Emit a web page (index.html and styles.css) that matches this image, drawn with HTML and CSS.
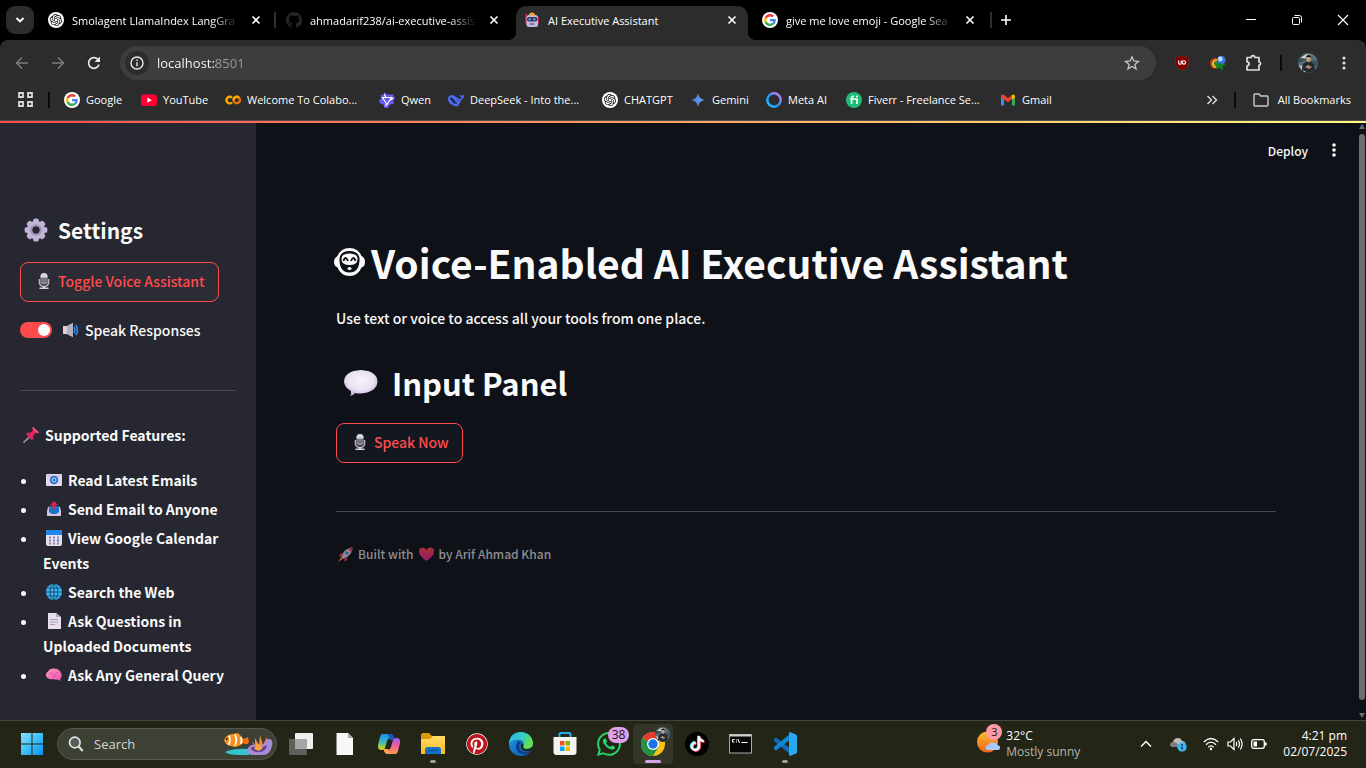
FILE: index.html
```html
<!DOCTYPE html>
<html lang="en">
<head>
<meta charset="utf-8">
<meta name="viewport" content="width=device-width, initial-scale=1">
<title>AI Executive Assistant</title>
<link rel="stylesheet" href="styles.css">
</head>
<body>
<svg class="defs" aria-hidden="true">
  <defs>
    <linearGradient id="win" x1="0" y1="0" x2="1" y2="1"><stop offset="0" stop-color="#8be0fb"/><stop offset=".5" stop-color="#3fc0fa"/><stop offset="1" stop-color="#0a90f5"/></linearGradient>
    <linearGradient id="gem" x1="0" y1="0" x2="1" y2="0"><stop offset="0" stop-color="#3f80f0"/><stop offset="1" stop-color="#6fa3e0"/></linearGradient>
    <linearGradient id="meta" x1="0" y1="1" x2="1" y2="0"><stop offset="0" stop-color="#1cc6ff"/><stop offset=".5" stop-color="#2a8cf5"/><stop offset="1" stop-color="#e77bf5"/></linearGradient>
    <linearGradient id="edgeTop" x1="0" y1="0" x2="1" y2=".4"><stop offset="0" stop-color="#2bb6ee"/><stop offset=".6" stop-color="#35cfc0"/><stop offset="1" stop-color="#68e04c"/></linearGradient>
    <linearGradient id="edgeLow" x1="0" y1="0" x2="1" y2="1"><stop offset="0" stop-color="#1f9de8"/><stop offset="1" stop-color="#0c4ea5"/></linearGradient>
    <linearGradient id="folder" x1="0" y1="0" x2="0" y2="1"><stop offset="0" stop-color="#ffdc68"/><stop offset="1" stop-color="#fcbb1c"/></linearGradient>
    <linearGradient id="sun" x1="0" y1="0" x2="0" y2="1"><stop offset="0" stop-color="#fbc02d"/><stop offset="1" stop-color="#f0601c"/></linearGradient>
    <linearGradient id="cop1" x1="0" y1="0" x2="0" y2="1"><stop offset="0" stop-color="#1c8df0"/><stop offset=".5" stop-color="#3bb6c0"/><stop offset=".8" stop-color="#9ad13a"/><stop offset="1" stop-color="#f3cf2c"/></linearGradient>
    <linearGradient id="cop2" x1="0" y1="0" x2="0" y2="1"><stop offset="0" stop-color="#a45cf0"/><stop offset=".5" stop-color="#f0609a"/><stop offset="1" stop-color="#fb9a4c"/></linearGradient>
    <radialGradient id="bubble" cx=".5" cy=".4" r=".6"><stop offset="0" stop-color="#f7f3fa"/><stop offset=".65" stop-color="#e9e1f0"/><stop offset="1" stop-color="#bfaed6"/></radialGradient>
    <linearGradient id="heart" x1="0" y1="0" x2="0" y2="1"><stop offset="0" stop-color="#a83236"/><stop offset="1" stop-color="#931b6e"/></linearGradient>
    <linearGradient id="brain" x1="0" y1="0" x2="1" y2="1"><stop offset="0" stop-color="#ff9bc0"/><stop offset="1" stop-color="#f04fae"/></linearGradient>

    <symbol id="close" viewBox="0 0 10 10"><path d="M1.500 1.500l7 7M8.500 1.500l-7 7" stroke="currentColor" stroke-width="1.600" fill="none"/></symbol>
    <symbol id="gpt" viewBox="0 0 32 32"><circle cx="16" cy="16" r="16" fill="#fff"/><path transform="translate(4 4)" fill="#111" d="M22.2819 9.8211a5.9847 5.9847 0 0 0-.5157-4.9108 6.0462 6.0462 0 0 0-6.5098-2.9A6.0651 6.0651 0 0 0 4.9807 4.1818a5.9847 5.9847 0 0 0-3.9977 2.9 6.0462 6.0462 0 0 0 .7427 7.0966 5.98 5.98 0 0 0 .511 4.9107 6.051 6.051 0 0 0 6.5146 2.9001A5.9847 5.9847 0 0 0 13.2599 24a6.0557 6.0557 0 0 0 5.7718-4.2058 5.9894 5.9894 0 0 0 3.9977-2.9001 6.0557 6.0557 0 0 0-.7475-7.0729zm-9.022 12.6081a4.4755 4.4755 0 0 1-2.8764-1.0408l.1419-.0804 4.7783-2.7582a.7948.7948 0 0 0 .3927-.6813v-6.7369l2.02 1.1686a.071.071 0 0 1 .038.052v5.5826a4.504 4.504 0 0 1-4.4945 4.4944zm-9.6607-4.1254a4.4708 4.4708 0 0 1-.5346-3.0137l.142.0852 4.783 2.7582a.7712.7712 0 0 0 .7806 0l5.8428-3.3685v2.3324a.0804.0804 0 0 1-.0332.0615L9.74 19.9502a4.4992 4.4992 0 0 1-6.1408-1.6464zM2.3408 7.8956a4.485 4.485 0 0 1 2.3655-1.9728V11.6a.7664.7664 0 0 0 .3879.6765l5.8144 3.3543-2.0201 1.1685a.0757.0757 0 0 1-.071 0l-4.8303-2.7865A4.504 4.504 0 0 1 2.3408 7.872zm16.5963 3.8558L13.1038 8.364 15.1192 7.2a.0757.0757 0 0 1 .071 0l4.8303 2.7913a4.4944 4.4944 0 0 1-.6765 8.1042v-5.6772a.79.79 0 0 0-.407-.667zm2.0107-3.0231l-.142-.0852-4.7735-2.7818a.7759.7759 0 0 0-.7854 0L9.409 9.2297V6.8974a.0662.0662 0 0 1 .0284-.0615l4.8303-2.7866a4.4992 4.4992 0 0 1 6.6802 4.66zM8.3065 12.863l-2.02-1.1638a.0804.0804 0 0 1-.038-.0567V6.0742a4.4992 4.4992 0 0 1 7.3757-3.4537l-.142.0805L8.704 5.459a.7948.7948 0 0 0-.3927.6813zm1.0976-2.3654l2.602-1.4998 2.6069 1.4998v2.9994l-2.5974 1.4997-2.6067-1.4997Z"/></symbol>
    <symbol id="google" viewBox="-8 -8 64 64"><circle cx="24" cy="24" r="32" fill="#fff"/><path fill="#EA4335" d="M24 9.500c3.540 0 6.710 1.220 9.210 3.600l6.850-6.850C35.900 2.380 30.470 0 24 0 14.620 0 6.510 5.380 2.560 13.220l7.980 6.190C12.430 13.720 17.740 9.500 24 9.500z"/><path fill="#4285F4" d="M46.980 24.550c0-1.570-.15-3.090-.38-4.550H24v9.020h12.940c-.58 2.960-2.260 5.480-4.780 7.180l7.730 6c4.510-4.180 7.090-10.360 7.090-17.650z"/><path fill="#FBBC05" d="M10.530 28.590c-.48-1.450-.76-2.990-.76-4.590s.27-3.140.76-4.590l-7.980-6.190C.92 16.460 0 20.120 0 24c0 3.880.92 7.540 2.560 10.780l7.970-6.190z"/><path fill="#34A853" d="M24 48c6.480 0 11.930-2.130 15.890-5.810l-7.730-6c-2.150 1.450-4.920 2.300-8.160 2.300-6.260 0-11.570-4.220-13.470-9.910l-7.980 6.190C6.510 42.620 14.620 48 24 48z"/></symbol>
    <symbol id="mic" viewBox="0 0 12 16"><path d="M1.500 6v3.500a4.500 4 0 0 0 9 0V6" stroke="#b5b0bb" stroke-width="1.700" fill="none"/><rect x="2.500" y="0" width="7" height="11.500" rx="3.500" fill="#8d8894"/><path d="M2.500 3.500a3.500 3.500 0 0 1 7 0v1h-7z" fill="#d9d5de"/><path d="M3 6h6M3 8h6" stroke="#5b5762" stroke-width=".8"/><path d="M5 13h2v1.500h3.500V16h-9v-1.500H5z" fill="#d8d4dc"/></symbol>
    <symbol id="me" viewBox="0 0 20 20"><circle cx="10" cy="10" r="10" fill="#5a7078"/><path d="M0 10A10 10 0 0 1 8 .2L9 7z" fill="#344d52"/><path d="M2 5l6-4 5 1-2 4z" fill="#bfcdd1"/><path d="M13 8l6-1 1 4-4 4z" fill="#365567"/><path d="M4 18l1-7 4-3h3l4 3 1 6q-6 5-13 1z" fill="#272a2b"/><ellipse cx="10.500" cy="6" rx="2.300" ry="3" fill="#c69d83"/><path d="M8 5q0-3 3-3 2 0 2 3l-1-1H9z" fill="#111"/><path d="M7 14l3-2 4 2-3 2z" fill="#b08b74"/><path d="M1 12l3 1v4zM5 17l3 2H6z" fill="#c8cccb"/></symbol>
  </defs>
</svg>

<header class="browser">
  <div class="tabstrip">
    <button class="tab-search" aria-label="Search tabs"><svg width="10" height="10" viewBox="0 0 10 10"><path d="M1.500 3L5 6.500 8.500 3" stroke="#fff" stroke-width="1.800" fill="none"/></svg></button>
    <div class="tab">
      <svg class="fav"><use href="#gpt"/></svg><span class="tab-title faded">Smolagent LlamaIndex LangGra</span>
      <button class="tab-close" aria-label="Close tab"><svg width="10" height="10"><use href="#close"/></svg></button>
    </div>
    <div class="tab ruled">
      <svg class="fav" viewBox="0 0 16 16"><path fill="#22262b" d="M8 0C3.580 0 0 3.580 0 8c0 3.540 2.290 6.530 5.470 7.590.4.070.55-.17.55-.38 0-.19-.01-.82-.01-1.490-2.010.370-2.530-.49-2.690-.94-.09-.23-.48-.94-.82-1.130-.28-.15-.68-.52-.01-.53.630-.01 1.080.580 1.230.820.720 1.210 1.870.870 2.330.660.070-.52.280-.87.510-1.070-1.780-.2-3.640-.89-3.640-3.950 0-.87.310-1.590.820-2.150-.08-.2-.36-1.020.080-2.120 0 0 .67-.21 2.200.820.640-.18 1.320-.27 2-.27s1.360.090 2 .27c1.530-1.040 2.200-.82 2.200-.82.440 1.100.160 1.920.080 2.120.510.560.820 1.270.820 2.150 0 3.070-1.870 3.750-3.650 3.950.290.250.540.730.540 1.480 0 1.070-.01 1.930-.01 2.200 0 .21.150.460.550.380A8.010 8.010 0 0 0 16 8c0-4.420-3.580-8-8-8z"/></svg><span class="tab-title faded">ahmadarif238/ai-executive-assis</span>
      <button class="tab-close" aria-label="Close tab"><svg width="10" height="10"><use href="#close"/></svg></button>
    </div>
    <div class="tab active">
      <svg class="fav" viewBox="0 0 16 16"><path d="M2 1.500v10.500M14 5v7" stroke="#e21c5c" stroke-width="1.500"/><rect x="2.500" y="3" width="11.500" height="12" rx="2.500" fill="#c9b9e0"/><path d="M5 3.500Q5 .5 8 .5t3 3z" fill="#f5a623"/><rect x="3" y="5" width="10.500" height="4.500" rx="2" fill="#3a3550"/><circle cx="5.700" cy="7.200" r="1.200" fill="#3fa0ff"/><circle cx="10.300" cy="7.200" r="1.200" fill="#3fa0ff"/><rect x="5.500" y="11.200" width="5" height="1.500" rx=".7" fill="#6f6384"/></svg><span class="tab-title">AI Executive Assistant</span>
      <button class="tab-close" aria-label="Close tab"><svg width="10" height="10"><use href="#close"/></svg></button>
    </div>
    <div class="tab">
      <svg class="fav"><use href="#google"/></svg><span class="tab-title faded">give me love emoji - Google Sea</span>
      <button class="tab-close" aria-label="Close tab"><svg width="10" height="10"><use href="#close"/></svg></button>
    </div>
    <button class="new-tab ruled" aria-label="New tab"><svg width="12" height="12" viewBox="0 0 12 12"><path d="M6 1v10M1 6h10" stroke="#fff" stroke-width="1.600"/></svg></button>
    <div class="win-controls">
      <button aria-label="Minimise"><svg width="12" height="12" viewBox="0 0 12 12"><path d="M1 5.500h10" stroke="#fff"/></svg></button>
      <button aria-label="Restore"><svg width="12" height="12" viewBox="0 0 12 12"><rect x="1.500" y="3.500" width="7" height="7" rx="1" stroke="#fff" fill="none"/><path d="M3.500 1.500h5a2 2 0 0 1 2 2v5" stroke="#fff" fill="none"/></svg></button>
      <button aria-label="Close"><svg width="12" height="12" viewBox="0 0 12 12"><path d="M1 1l10 10M11 1L1 11" stroke="#fff" stroke-width="1.200"/></svg></button>
    </div>
  </div>

  <div class="toolbar">
    <nav class="nav-buttons">
      <button aria-label="Back"><svg width="16" height="16" viewBox="0 0 16 16"><path d="M14 8H3M8 2.500L2.500 8 8 13.500" stroke="#7c7c7c" stroke-width="1.500" fill="none"/></svg></button>
      <button aria-label="Forward"><svg width="16" height="16" viewBox="0 0 16 16"><path d="M2 8h11M8 2.500L13.500 8 8 13.500" stroke="#7c7c7c" stroke-width="1.500" fill="none"/></svg></button>
      <button aria-label="Reload"><svg width="16" height="16" viewBox="0 0 16 16"><path d="M13 9.500A5.300 5.300 0 1 1 12.300 5" stroke="#e8e8e8" stroke-width="1.700" fill="none"/><path d="M14 1.500V7H8.500z" fill="#e8e8e8"/></svg></button>
    </nav>
    <div class="omnibox">
      <button class="site-info" aria-label="View site information"><svg width="14" height="14" viewBox="0 0 14 14"><circle cx="7" cy="7" r="6" stroke="#e8e8e8" stroke-width="1.400" fill="none"/><path d="M7 6.200v4M7 3.500v1.400" stroke="#e8e8e8" stroke-width="1.400"/></svg></button>
      <input class="url" type="text" aria-label="Address" value="localhost:8501">
      <button class="star" aria-label="Bookmark this tab"><svg width="16" height="16" viewBox="0 0 16 16"><path d="M8 1.800l1.800 4.200 4.600.4-3.500 3 1.100 4.500L8 11.500l-4 2.400 1.100-4.500-3.500-3 4.600-.4z" stroke="#c7c7c7" stroke-width="1.300" fill="none"/></svg></button>
    </div>
    <div class="extensions">
      <button aria-label="uBlock Origin"><svg width="16" height="16" viewBox="0 0 16 16"><path d="M8 .3q3 1.700 6.600 2V9Q13.500 13.500 8 15.700 2.500 13.500 1.400 9V2.300Q5 2 8 .3z" fill="#800000" stroke="#5c3a3a" stroke-width=".6"/><path d="M4.700 5.500V8q0 1.300 1.300 1.300T7.300 8V5.500" stroke="#fff" stroke-width="1.100" fill="none"/><circle cx="9.900" cy="7.400" r="1.700" stroke="#fff" stroke-width="1.100" fill="none"/></svg></button>
      <button aria-label="Internet Download Manager"><svg width="16" height="16" viewBox="0 0 16 16"><path d="M6.500 3.500Q.5 4 1 9q.500 3.500 4 4" stroke="#e03a1c" stroke-width="1.600" fill="none"/><path d="M8 5Q2.500 5.500 3 9q.500 2.500 4 3.500" stroke="#f5c61e" stroke-width="2.200" fill="none"/><path d="M8 7Q5 8 5.500 10l2 2" stroke="#2a9a2a" stroke-width="2" fill="none"/><circle cx="11.200" cy="5.200" r="4.400" fill="#3b74d8"/><circle cx="10.300" cy="4" r="2.400" fill="#c3daf8"/><path d="M7 8.500l9 .5-3 2-.5 4.500L10 13l-4 .5z" fill="#15801c"/></svg></button>
      <button aria-label="Extensions"><svg width="18" height="18" viewBox="0 0 18 18"><path d="M2 3.500h4.200a1.800 1.800 0 0 1 3.600 0H14V8a1.600 1.600 0 0 1 0 3.200V16H2v-4.200a2 2 0 0 0 0-4z" stroke="#dedede" stroke-width="1.700" fill="none" stroke-linejoin="round"/></svg></button>
      <span class="bar"></span>
      <button aria-label="Profile"><svg width="20" height="20"><use href="#me"/></svg></button>
      <button aria-label="Menu"><svg width="4" height="14" viewBox="0 0 4 14" fill="#dedede"><circle cx="2" cy="2" r="1.600"/><circle cx="2" cy="7" r="1.600"/><circle cx="2" cy="12" r="1.600"/></svg></button>
    </div>
  </div>

  <div class="bookmarks">
    <button class="apps" aria-label="Apps"><svg width="15" height="15" viewBox="0 0 15 15" fill="none" stroke="#d8d8d8" stroke-width="1.800"><path d="M1 1h4v4H1zM10 1h4v4h-4zM1 10h4v4H1zM10 10h4v4h-4z"/></svg></button>
    <span class="bar"></span>
    <nav class="marks">
      <a href="#"><svg class="fav"><use href="#google"/></svg>Google</a>
      <a href="#"><svg class="fav" viewBox="0 0 16 16"><rect x="0" y="2.500" width="16" height="11.500" rx="2.500" fill="#f03"/><path d="M6.300 5.500v5.300l4.500-2.600z" fill="#fff"/></svg>YouTube</a>
      <a href="#"><svg class="fav" viewBox="0 0 16 16"><g fill="none" stroke-width="2.400"><path d="M7 5.700A3.300 3.300 0 1 0 7 10.500" stroke="#f9ab00"/><circle cx="11.700" cy="8" r="3.200" stroke="#e8710a"/><path d="M8.500 8a3.200 3.200 0 0 1 5.500-2.200" stroke="#f9ab00"/></g></svg>Welcome To Colabo...</a>
      <a href="#"><svg class="fav" viewBox="0 0 16 16"><path d="M5.500 0L8 2.500h6L16 6l-1.800 2.500L15 12l-4 .5L9 16H5.500L4.500 12.500 1 11.500 0 8.500 2.500 6 1 3.500l3.500-.5z" fill="#655bf5"/><path d="M3.500 5.500h9L8 12.500zM5 2l2 3.500M14.500 6l-3 2M6 14l2-2" stroke="#fff" stroke-width="1.200" fill="none"/></svg>Qwen</a>
      <a href="#"><svg class="fav" viewBox="0 0 16 16"><path d="M0 7q0-4 4.500-4L9 5.500 11 7q2 .5 3-1.500Q11.500 5 11.500 2.500L14 4q1-1.500 2-1 0 4-3 5-.5 3.500-3 5l1.500 1q-4 1-7-1Q0 11 0 7z" fill="#4d6bfe"/><path d="M2 6q2-1 4 2t3 3.500Q5.500 12 4 9.500 3 7.500 2 6zM8.500 7l2.500 2.500" stroke="#262a40" stroke-width=".6" fill="#262a40"/></svg>DeepSeek - Into the...</a>
      <a href="#"><svg class="fav"><use href="#gpt"/></svg>CHATGPT</a>
      <a href="#"><svg class="fav" viewBox="0 0 16 16"><path d="M8 1q.8 6.200 7 7-6.200.8-7 7-.8-6.200-7-7 6.200-.8 7-7z" fill="url(#gem)"/></svg>Gemini</a>
      <a href="#"><svg class="fav" viewBox="0 0 16 16"><circle cx="8" cy="8" r="6.700" stroke="url(#meta)" stroke-width="2.500" fill="none"/></svg>Meta AI</a>
      <a href="#"><svg class="fav" viewBox="0 0 16 16"><circle cx="8" cy="8" r="8" fill="#1dbf73"/><path d="M5.600 12V6q0-1.800 1.800-1.800H8M4 7h7v5" stroke="#fff" stroke-width="1.600" fill="none"/><circle cx="10.900" cy="4.500" r="1" fill="#fff"/></svg>Fiverr - Freelance Se...</a>
      <a href="#"><svg class="fav" viewBox="0 0 16 16"><path d="M1 4v9.500h3V7z" fill="#4285f4"/><path d="M15 4v9.500h-3V7z" fill="#34a853"/><path d="M1 4.200Q1.500 1.500 4 3l4 3.300L12 3v4L8 10.300 1 5.500z" fill="#ea4335"/><path d="M12 3q2.500-1.500 3 1.200v1.300L12 8z" fill="#fbbc04"/></svg>Gmail</a>
    </nav>
    <button class="more" aria-label="More bookmarks"><svg width="12" height="10" viewBox="0 0 12 10"><path d="M1.500 1l4 4-4 4M6.500 1l4 4-4 4" stroke="#dedede" stroke-width="1.400" fill="none"/></svg></button>
    <span class="bar"></span>
    <button class="all-marks"><svg width="16" height="14" viewBox="0 0 16 14"><path d="M1 12V2q0-1 1-1h4l1.500 2H14q1 0 1 1v8q0 1-1 1H2q-1 0-1-1z" stroke="#c9c9c9" stroke-width="1.400" fill="none"/></svg>All Bookmarks</button>
  </div>
</header>

<div class="app">
  <aside class="sidebar">
    <h2 class="side-title"><svg width="24" height="24" viewBox="0 0 24 24" role="img" aria-label="Gear"><g fill="#c3b5d8"><path d="M9.500 1q2.500-1 5 0l1 6h-7zM9.500 23q2.500 1 5 0l1-6h-7zM1 9.500q-1 2.500 0 5l6 1v-7zM23 9.500q1 2.500 0 5l-6 1v-7z"/><path transform="rotate(45 12 12)" d="M9.500 1q2.500-1 5 0l1 6h-7zM9.500 23q2.500 1 5 0l1-6h-7zM1 9.500q-1 2.500 0 5l6 1v-7zM23 9.500q1 2.500 0 5l-6 1v-7z"/></g><circle cx="12" cy="12" r="6.500" fill="#262730" stroke="#c3b5d8" stroke-width="5.500"/><circle cx="12" cy="12" r="5" fill="none" stroke="#9f92b3" stroke-width="1.600"/></svg>Settings</h2>
    <button class="st-button"><svg width="12" height="16" aria-hidden="true"><use href="#mic"/></svg>Toggle Voice Assistant</button>
    <label class="toggle"><input type="checkbox" role="switch" checked><svg width="17" height="16" viewBox="0 0 17 16" aria-hidden="true"><path d="M0 4h4l6-3v14l-6-3H0z" fill="#d8d0dd"/><path d="M4 4l6-3v14l-6-3z" fill="#b5adba"/><path d="M11 5q2 3 0 6M12.800 3q3.200 5 0 10" stroke="#2b8ef0" stroke-width="1.500" fill="none"/></svg>Speak Responses</label>
    <hr>
    <p class="side-label"><svg width="17" height="16" viewBox="0 0 17 16" aria-hidden="true"><path d="M6.500 10L.500 15.500" stroke="#a6a0ad" stroke-width="1.500"/><path d="M10 0l6 5.500-2 1-1.500-.5-2.500 3 .500 3-2 1-5.500-6 1.500-1.500 2.500.5 3-3z" fill="#e3235f"/><path d="M10 0l6 5.500-2 .5-5-4.500z" fill="#f8518a"/></svg>Supported Features:</p>
    <ul class="features">
      <li><svg width="16" height="16" viewBox="0 0 16 16" aria-hidden="true"><rect y="2" width="16" height="12" rx="1" fill="#e3d9ef"/><path d="M0 3l8 6 8-6" fill="#cfc2e0"/><circle cx="8" cy="8" r="4.300" fill="#2b78d2"/><circle cx="8" cy="8" r="2" stroke="#b9d3f5" fill="none"/></svg>Read Latest Emails</li>
      <li><svg width="16" height="16" viewBox="0 0 16 16" aria-hidden="true"><path d="M2 6h12l1 4v5H1v-5z" fill="#cfc4dd"/><path d="M3 5h10v6l-3 2H6l-3-2z" fill="#1b73c9"/><path d="M8 0l4 4H9.500v4h-3V4H4z" fill="#e0234e"/></svg>Send Email to Anyone</li>
      <li><svg width="16" height="16" viewBox="0 0 16 16" aria-hidden="true"><rect width="16" height="16" rx="2" fill="#e6dff0"/><path d="M0 5V2q0-2 2-2h12q2 0 2 2v3z" fill="#1c85f0"/><path d="M3 7.500h2M7 7.500h2M11 7.500h2M3 10.500h2M7 10.500h2M3 13.500h2M7 13.500h2M11 13.500h2" stroke="#9587a8" stroke-width="2"/><path d="M11 10.500h2" stroke="#1c85f0" stroke-width="2"/></svg>View Google Calendar Events</li>
      <li><svg width="16" height="16" viewBox="0 0 16 16" aria-hidden="true"><circle cx="8" cy="8" r="8" fill="#38b8f5"/><path d="M8 0v16M0 8h16M1.500 4h13M1.500 12h13" stroke="#174d6e"/><ellipse cx="8" cy="8" rx="3.800" ry="7.800" stroke="#174d6e" fill="none"/></svg>Search the Web</li>
      <li><svg width="16" height="16" viewBox="0 0 16 16" aria-hidden="true"><path d="M2 0h8l5 4v12H2z" fill="#e7dfee"/><path d="M10 0v4h5z" fill="#b4a6c6"/><path d="M4 6.500h8M4 9h8M4 11.500h5" stroke="#a89bb5"/></svg>Ask Questions in Uploaded Documents</li>
      <li><svg width="16" height="16" viewBox="0 0 16 16" aria-hidden="true"><path d="M0 9q-.5-3 2-4.500Q4 1 8 1.500q5 0 6.500 3.500Q17 9 14.500 11.500l-.5 2.500-2-1.500Q9 13 7.500 12 2 13 0 9z" fill="url(#brain)"/><path d="M3 7q2-3 4 0t4-2M6 10q3-2 5 1" stroke="#e05aa4" fill="none"/></svg>Ask Any General Query</li>
    </ul>
  </aside>

  <main class="main">
    <div class="app-bar">
      <button class="deploy">Deploy</button>
      <button class="kebab" aria-label="Main menu"><svg width="4" height="14" viewBox="0 0 4 14" fill="#fafafa"><circle cx="2" cy="2" r="1.800"/><circle cx="2" cy="7" r="1.800"/><circle cx="2" cy="12" r="1.800"/></svg></button>
    </div>
    <section class="content">
      <h1><svg width="32" height="28" viewBox="0 0 32 28" role="img" aria-label="Smiling face"><path d="M15.500 0Q24 0 27.500 8 31 9.500 31 14t-3.500 5.500Q24 28 15.500 28T3.500 19.500Q0 18 0 14t3.500-6Q7 0 15.500 0z" fill="#fafafa"/><path d="M15.500 3Q24 3 25.500 10 26 24.500 15.500 24.500T5.500 10Q7 3 15.500 3z" fill="#0e1117"/><path d="M7.500 11q0-5.500 8-5.500t8 5.500q0 6-8 6t-8-6z" fill="#fafafa"/><path d="M9.500 13q2-6 4.500 0M17 13q2.500-6 4.500 0" stroke="#0e1117" stroke-width="1.800" fill="none"/><ellipse cx="15.500" cy="20.500" rx="2" ry="1.500" fill="#fafafa"/></svg>Voice-Enabled AI Executive Assistant</h1>
      <p>Use text or voice to access all your tools from one place.</p>
      <h2><svg width="36" height="28" viewBox="0 0 36 28" aria-hidden="true"><path d="M18 1q16 1 16.500 11.500Q34 23 18 24.500q-4 0-6-.5Q10 27 7 27 8.500 25 8 22 1 18 1 12.500 1.500 2 18 1z" fill="url(#bubble)"/></svg>Input Panel</h2>
      <button class="st-button"><svg width="12" height="16" aria-hidden="true"><use href="#mic"/></svg>Speak Now</button>
      <hr>
      <p class="caption"><svg width="15" height="15" viewBox="0 0 15 15" aria-hidden="true"><path d="M14.500.5Q9 .5 5 6L3 10l2 2 4-2q5.500-4 5.500-9.500z" fill="#8c8993"/><path d="M14.500.5q-3 0-4.500 1.500l3 3q1.500-1.500 1.500-4.500z" fill="#a3283c"/><path d="M5.500 5.500L2 7l-1 3 3-1zM9.500 9.500L9 13l-3 1.500.5-3z" fill="#a02445"/><circle cx="9" cy="6" r="1.600" fill="#2a5b96"/><path d="M3 10.500L0 15l4.500-3z" fill="#b3692b"/></svg>Built with<svg width="15" height="14" viewBox="0 0 15 14" aria-hidden="true"><path d="M7.500 14Q0 9 0 4.500 0 .5 4 .5 6.500.5 7.500 3 8.500.5 11 .5q4 0 4 4Q15 9 7.500 14z" fill="url(#heart)"/></svg>by Arif Ahmad Khan</p>
    </section>
  </main>
  <div class="scrollbar" aria-hidden="true"><span class="arrow up"></span><span class="thumb"></span><span class="arrow down"></span></div>
</div>

<footer class="taskbar">
  <button class="start" aria-label="Start"><svg width="24" height="24" viewBox="0 0 24 24"><path d="M1 1h10.500v10.500H1zM12.500 1H23v10.500H12.500zM1 12.500h10.500V23H1zM12.500 12.500H23V23H12.500z" fill="url(#win)"/></svg></button>
  <div class="search">
    <svg width="16" height="16" viewBox="0 0 16 16" aria-hidden="true"><circle cx="6.800" cy="6.500" r="5.300" stroke="#e3e6e3" stroke-width="1.700" fill="#545e58"/><path d="M10.700 10.500l4 4.500" stroke="#e3e6e3" stroke-width="2"/></svg>
    <input type="search" aria-label="Search" placeholder="Search">
    <svg width="50" height="24" viewBox="0 0 50 24" aria-hidden="true"><path d="M1 20q9-4 24-3v6H15Q4 23 1 20z" fill="#35c3cc"/><path d="M0 8q2-5 8-6l6-1 3 3 3 4 4-3v7l-5-1q-4 4-9 4l-3-1Q1 13 0 8z" fill="#f5921e"/><circle cx="22" cy="9" r="3" fill="#f26a1c"/><path d="M5 3.500q2 4.500-.5 9.500M11 2.500q2.500 5 0 11M17 5q1 3 0 7" stroke="#fff" stroke-width="1.700" fill="none"/><circle cx="2.800" cy="7" r=".9" fill="#111"/><path d="M28 9l3 4V6l4 7 1-10 3 10 4-8v8l5-4-2 9-14 3z" fill="#f08b45"/><path d="M24 16q4-6 10-1 7-2 9-8 7-1 5 7-2 9-9 9H27q-5-2-3-7z" fill="#a68bd6"/><path d="M27 16q4-3 8 1l8-4q-1 7-8 7-7 0-8-4z" fill="#5d3e8d"/><path d="M30 17l3-6 6 5-4 3z" fill="#f7a53b"/></svg>
  </div>
  <div class="pinned">
    <button aria-label="Task view"><svg width="24" height="24" viewBox="0 0 24 24"><rect x="6" y="1" width="18" height="16" rx="1" fill="#eee"/><rect x="0" y="7" width="18" height="16" rx="1" fill="#5f605e"/><rect x="6" y="7" width="12" height="10" fill="#a5a6a5"/></svg></button>
    <button aria-label="Document"><svg width="18" height="24" viewBox="0 0 18 24"><path d="M.5 1H12l5 5v17H.5z" fill="#f8f8f8"/><path d="M12 1v5h5z" fill="#a9a9a9"/></svg></button>
    <button aria-label="Copilot"><svg width="24" height="24" viewBox="0 0 24 24"><path d="M5 2h8q3 0 4 4H13q-2 0-3 3l-2 7q-1 2-3 2-5 0-4-5l2-8q1-3 2-3z" fill="url(#cop1)"/><path d="M11 2h3q2 0 3 3l1 3h-5z" fill="#1c52c8"/><path d="M19 22h-8q-3 0-4-4h4q2 0 3-3l2-7q1-2 3-2 5 0 4 5l-2 8q-1 3-2 3z" fill="url(#cop2)"/><path d="M13 22h-3q-2 0-3-3l-.5-2H11z" fill="#f9a24e"/></svg></button>
    <button class="running" aria-label="File Explorer"><svg width="24" height="24" viewBox="0 0 24 24"><path d="M0 3q0-2 2-2h6l3 3h11v4H0z" fill="#dc9a08"/><path d="M0 7h9l3-3h12v18H0z" fill="url(#folder)"/><path d="M4 22v-4q0-3 3-3h10q3 0 3 3v4z" fill="#1074ca"/><path d="M7 18.500h10" stroke="#0c579a" stroke-width="1.500"/></svg></button>
    <button aria-label="Pinterest"><svg width="22" height="22" viewBox="-.7 -.7 17.400 17.400"><circle cx="8" cy="8" r="8.500" fill="#fff"/><path fill="#bd1620" d="M8 0a8 8 0 0 0-2.915 15.452c-.07-.633-.134-1.606.027-2.297.146-.625.938-3.977.938-3.977s-.239-.479-.239-1.187c0-1.113.645-1.943 1.448-1.943.682 0 1.012.512 1.012 1.127 0 .686-.437 1.712-.663 2.663-.188.796.4 1.446 1.185 1.446 1.422 0 2.515-1.500 2.515-3.664 0-1.915-1.377-3.254-3.342-3.254-2.276 0-3.612 1.707-3.612 3.471 0 .688.265 1.425.595 1.826a.24.240 0 0 1 .056.230c-.061.252-.196.796-.222.907-.035.146-.116.177-.268.107-1-.465-1.624-1.926-1.624-3.100 0-2.523 1.834-4.840 5.286-4.840 2.775 0 4.932 1.977 4.932 4.620 0 2.757-1.739 4.976-4.151 4.976-.811 0-1.573-.421-1.834-.919l-.498 1.902c-.181.695-.669 1.566-.995 2.097A8 8 0 1 0 8 0"/></svg></button>
    <button aria-label="Edge"><svg width="24" height="24" viewBox="0 0 24 24"><circle cx="12" cy="12" r="12" fill="url(#edgeLow)"/><path d="M0 11Q1.500 0 12.500 0 22 1 24 10q.5 7-6 7-5 0-3.500-3.500Q16 8 9 7.500 2.500 7.500 0 12z" fill="url(#edgeTop)"/><path d="M9 9q-4 6 0 11 5 4 12 0 1-.5.500-1-9 3-11-3-1-4 2-6z" fill="#0b3f86"/><path d="M14.500 13.500Q13 17 18 17q3 0 5-2l1 0-2 3.500q-7 2.500-10-2.500-1-3 .500-5 2 1 2 2.500z" fill="#232516"/></svg></button>
    <button aria-label="Microsoft Store"><svg width="24" height="24" viewBox="0 0 24 24"><path d="M6.500 7V2.500Q6.500 1 8 1h8q1.500 0 1.500 1.500V7" stroke="#28aee8" stroke-width="2" fill="none"/><path d="M.500 5h23v15q0 3-3 3h-17q-3 0-3-3z" fill="#f3f3f3"/><path d="M7 9h4.500v4.500H7z" fill="#f25022"/><path d="M12.500 9H17v4.500h-4.500z" fill="#7fba00"/><path d="M7 14.500h4.500V19H7z" fill="#00a4ef"/><path d="M12.500 14.500H17V19h-4.500z" fill="#ffb900"/></svg></button>
    <button aria-label="WhatsApp, 38 unread"><svg width="24" height="24" viewBox="0 0 16 16"><path fill="#25d366" d="M13.601 2.326A7.850 7.850 0 0 0 7.994 0C3.627 0 .068 3.558.064 7.926c0 1.399.366 2.760 1.057 3.965L0 16l4.204-1.102a7.900 7.900 0 0 0 3.790.965h.004c4.368 0 7.926-3.558 7.930-7.930A7.900 7.900 0 0 0 13.600 2.326zM7.994 14.521a6.600 6.600 0 0 1-3.356-.92l-.24-.144-2.494.654.666-2.433-.156-.251a6.560 6.560 0 0 1-1.007-3.505c0-3.626 2.957-6.584 6.591-6.584a6.560 6.560 0 0 1 4.660 1.931 6.560 6.560 0 0 1 1.928 4.660c-.004 3.639-2.961 6.592-6.592 6.592m3.615-4.934c-.197-.099-1.170-.578-1.353-.646-.182-.065-.315-.099-.445.099-.133.197-.513.646-.627.775-.114.133-.232.148-.43.050-.197-.1-.836-.308-1.592-.985-.59-.525-.985-1.175-1.103-1.372-.114-.198-.011-.304.088-.403.087-.088.197-.232.296-.346.1-.114.133-.198.198-.33.065-.134.034-.248-.015-.347-.05-.099-.445-1.076-.612-1.470-.16-.389-.323-.335-.445-.34-.114-.007-.247-.007-.38-.007a.73.730 0 0 0-.529.247c-.182.198-.691.677-.691 1.654s.71 1.916.810 2.049c.098.133 1.394 2.132 3.383 2.992.470.205.840.326 1.129.418.475.152.904.129 1.246.080.380-.058 1.171-.48 1.338-.943.164-.464.164-.86.114-.943-.049-.084-.182-.133-.38-.232"/></svg><span class="badge">38</span></button>
    <button class="current" aria-label="Chrome"><svg width="24" height="24" viewBox="0 0 24 24"><circle cx="12" cy="12" r="12" fill="#fbc116"/><path d="M12 12L1.600 6A12 12 0 0 1 22.400 6z" fill="#e33b2e"/><path d="M12 12L1.600 6A12 12 0 0 0 12 24l5.500-9z" fill="#229342"/><circle cx="12" cy="12" r="6" fill="#fff"/><circle cx="12" cy="12" r="4.700" fill="#1a73e8"/></svg><svg class="profile-pip" width="15" height="15"><use href="#me"/></svg></button>
    <button aria-label="TikTok"><svg width="24" height="24" viewBox="0 0 24 24"><circle cx="12" cy="12" r="12" fill="#000"/><g transform="translate(5 4.500) scale(.9)"><path d="M9 0h1.980c.144.715.540 1.617 1.235 2.512C12.895 3.389 13.797 4 15 4v2c-1.753 0-3.070-.814-4-1.829V11a5 5 0 1 1-5-5v2a3 3 0 1 0 3 3z" fill="#25f4ee" stroke="#25f4ee" transform="translate(-.7 -.5)"/><path d="M9 0h1.980c.144.715.540 1.617 1.235 2.512C12.895 3.389 13.797 4 15 4v2c-1.753 0-3.070-.814-4-1.829V11a5 5 0 1 1-5-5v2a3 3 0 1 0 3 3z" fill="#fe2c55" stroke="#fe2c55" transform="translate(.8 .7)"/><path d="M9 0h1.980c.144.715.540 1.617 1.235 2.512C12.895 3.389 13.797 4 15 4v2c-1.753 0-3.070-.814-4-1.829V11a5 5 0 1 1-5-5v2a3 3 0 1 0 3 3z" fill="#fff" stroke="#fff" stroke-width=".6"/></g></svg></button>
    <button aria-label="Command Prompt"><svg width="24" height="20" viewBox="0 0 24 20"><rect x=".5" y=".5" width="22" height="18.500" fill="#060606" stroke="#a9a9a9"/><path d="M1 1.500h21" stroke="#d0d0d0" stroke-width="2"/><path d="M5.500 5.500H3.500v2.500h2M7.500 5.500v1M7.500 7.500v1M9 5l1.500 4M12.500 8.500h6" stroke="#fff" fill="none"/></svg></button>
    <button class="running" aria-label="Visual Studio Code"><svg width="24" height="24" viewBox="0 0 24 24"><path d="M1 7l2-1.500L18 17v6L1 9z" fill="#0a6cb8"/><path d="M1 17l2 1.500L18 7V1L1 15z" fill="#0f86d6"/><path d="M17 0l6 2.500q1 .5 1 1.500v16q0 1-1 1.500L17 24l-1-1V1z" fill="#29a8f2"/></svg></button>
  </div>
  <button class="weather">
    <span class="weather-icon"><svg width="24" height="24" viewBox="0 0 24 24" aria-hidden="true"><circle cx="10.500" cy="12" r="10.500" fill="url(#sun)"/><path d="M10 20q-2-1-1.500-3t3-2q2-4 5.500-2 3-.5 3.500 2 3 .5 2.500 3 0 2-2 2z" fill="#a9c8fa"/></svg><span class="alert">3</span></span>
    <span class="two-line"><span>32°C</span><span class="dim">Mostly sunny</span></span>
  </button>
  <div class="tray">
    <button aria-label="Show hidden icons"><svg width="12" height="8" viewBox="0 0 12 8"><path d="M1 6.500l5-5 5 5" stroke="#fff" stroke-width="1.500" fill="none"/></svg></button>
    <button aria-label="OneDrive"><svg width="17" height="16" viewBox="0 0 17 16"><path d="M3 11Q0 10.500.5 8 1 6 3 6q1-4 5-4 3 0 4 3 3 0 3.500 3l-1 3z" fill="#bdbdbd"/><path d="M3 11Q0 10.500.5 8 1 6 3 6q4 0 7 5z" fill="#7d7d7d"/><circle cx="12" cy="11" r="4.700" fill="#3fb6f0"/><path d="M12 10.500v3M12 8v1.500" stroke="#0d3550" stroke-width="1.500"/></svg></button>
    <button class="system" aria-label="Network, volume and battery">
      <svg width="16" height="14" viewBox="0 0 16 14" fill="none" stroke="#fff" stroke-width="1.300"><path d="M.8 5q7.200-7 14.400 0M3 7.700q5-5 10 0M5.300 10.200q2.700-2.600 5.400 0"/><circle cx="8" cy="12" r="1.200" fill="#fff" stroke="none"/></svg>
      <svg width="16" height="14" viewBox="0 0 16 14" fill="none" stroke="#fff" stroke-width="1.200"><path d="M1 5h2.500L7 1.500v11L3.500 9H1zM9 5q1.500 2 0 4M11.200 3.300q2.600 3.700 0 7.400M13.300 1.500q3.600 5.500 0 11"/></svg>
      <svg width="16" height="10" viewBox="0 0 16 10"><rect x=".7" y=".7" width="12.600" height="8.600" rx="2" stroke="#fff" stroke-width="1.300" fill="none"/><path d="M14.800 3.500v3" stroke="#fff" stroke-width="1.600"/><rect x="2.500" y="2.500" width="3.500" height="5" fill="#fff"/></svg>
    </button>
    <button class="two-line clock"><span>4:21 pm</span><span>02/07/2025</span></button>
  </div>
</footer>
</body>
</html>
```
FILE: styles.css
```css
* { box-sizing: border-box; }
:root {
  --ui: "Open Sans", "Noto Sans", sans-serif;
  --st: "Noto Sans CJK SC", "Noto Sans", sans-serif;
  --chrome: #2c2c2c;
  --red: #ff4b4b;
}
body {
  margin: 0;
  height: 100vh;
  display: flex;
  flex-direction: column;
  overflow: hidden;
  background: #000;
  color: #fff;
  font-family: var(--ui);
  font-size: 12px;
}
button, input {
  font: inherit;
  color: inherit;
  background: none;
  border: 0;
  padding: 0;
  margin: 0;
}
button { display: inline-flex; align-items: center; justify-content: center; }
svg { display: block; flex: none; }
a { color: inherit; text-decoration: none; }
.defs { position: absolute; width: 0; height: 0; }
.fav { width: 16px; height: 16px; }
.bar { width: 2px; height: 16px; background: #0a0a0a; flex: none; }

/* Browser frame */
.browser { flex: none; }
.tabstrip { display: flex; height: 40px; padding: 6px 0 0 6px; }
.tab-search { width: 28px; height: 28px; border-radius: 9px; background: var(--chrome); margin-right: 4px; }
.tab {
  position: relative;
  display: flex;
  align-items: center;
  gap: 8px;
  width: 238px;
  padding: 0 15px 6px 10px;
  font-size: 11px;
}
.tab > * { position: relative; }
.tab-title { flex: 1; white-space: nowrap; }
.faded {
  -webkit-mask-image: linear-gradient(90deg, #000 calc(100% - 28px), transparent);
  mask-image: linear-gradient(90deg, #000 calc(100% - 28px), transparent);
}
.tab-close { width: 10px; margin-left: 4px; }
.ruled::after {
  content: "";
  position: absolute;
  left: -2px;
  top: 6px;
  width: 2px;
  height: 16px;
  background: #2e2e2e;
}
.tab.active::before {
  content: "";
  position: absolute;
  inset: 0 4px 0 2px;
  background: var(--chrome);
  border-radius: 10px 10px 0 0;
}
.tab.active::after {
  content: "";
  position: absolute;
  left: -6px;
  right: -4px;
  bottom: 0;
  height: 8px;
  background:
    radial-gradient(circle at 0 0, transparent 8px, var(--chrome) 8px) left / 8px 8px no-repeat,
    radial-gradient(circle at 100% 0, transparent 8px, var(--chrome) 8px) right / 8px 8px no-repeat;
}
.new-tab { position: relative; width: 28px; height: 28px; margin-left: 2px; }
.win-controls { display: flex; margin-left: auto; }
.win-controls button { width: 46px; height: 28px; }

.toolbar {
  display: flex;
  align-items: center;
  height: 46px;
  background: var(--chrome);
  border-radius: 8px 8px 0 0;
}
.nav-buttons { display: flex; gap: 4px; padding-left: 6px; margin-right: 10px; }
.nav-buttons button { width: 32px; height: 32px; }
.omnibox {
  flex: 1;
  display: flex;
  align-items: center;
  height: 34px;
  padding: 0 16px 0 5px;
  border-radius: 17px;
  background: #3d3d3d;
}
.site-info { width: 24px; height: 24px; border-radius: 50%; background: var(--chrome); }
.url {
  flex: 1;
  margin: 0 8px;
  font-size: 13px;
  outline: none;
  color: transparent;
  caret-color: #fff;
  background: linear-gradient(90deg, #fff 59px, #9b9b9b 59px);
  -webkit-background-clip: text;
  background-clip: text;
}
.extensions { display: flex; align-items: center; padding: 0 4px 0 8px; }
.extensions button { width: 36px; height: 32px; }
.extensions .bar { margin: 0 8px; }

.bookmarks {
  display: flex;
  align-items: center;
  height: 35px;
  padding: 0 15px 7px 18px;
  background: var(--chrome);
  border-bottom: 1px solid #4c4c4c;
  font-size: 11px;
}
.apps { margin-right: 15px; }
.marks {
  flex: 1;
  display: grid;
  grid-template-columns: 77px 84px 154px 69px 154px 88px 76px 80px 154px 1fr;
  padding-left: 14px;
}
.marks a { display: flex; align-items: center; gap: 6px; white-space: nowrap; }
.more { margin-right: 16px; }
.all-marks { gap: 9px; margin-left: 17px; }

/* Application */
.app {
  flex: 1;
  min-height: 0;
  display: flex;
  position: relative;
  background: #0e1117;
  color: #fafafa;
  font-family: var(--st);
  font-size: 14px;
  font-weight: 500;
}
.app::before {
  content: "";
  position: absolute;
  inset: 0 0 auto;
  height: 2px;
  background: linear-gradient(90deg, #ff4b4b, #fffd80);
}
.app h1, .app h2, .app p { margin: 0; }
.app hr { border: 0; height: 1px; background: #46474f; }
.sidebar { width: 256px; flex: none; padding: 91px 20px 0; background: #262730; }
.side-title {
  display: flex;
  align-items: center;
  gap: 10px;
  padding-left: 4px;
  font-size: 21px;
  line-height: 36px;
  font-weight: 700;
}
.st-button {
  height: 40px;
  margin-top: 14px;
  padding: 0 13px 2px 17px;
  gap: 8px;
  border: 1px solid var(--red);
  border-radius: 8px;
  color: var(--red);
  background: #2b2c36;
}
.toggle { display: flex; align-items: center; height: 24px; margin-top: 16px; }
.toggle input {
  appearance: none;
  width: 32px;
  height: 16px;
  margin-right: 11px;
  padding: 2px;
  border-radius: 8px;
  background: var(--red);
}
.toggle input::before {
  content: "";
  display: block;
  width: 12px;
  height: 12px;
  margin-left: auto;
  border-radius: 50%;
  background: #fafafa;
}
.toggle svg { margin-right: 5px; }
.sidebar hr { margin: 48px 0 31px; }
.side-label { display: flex; align-items: center; gap: 5px; padding-left: 3px; line-height: 26px; font-weight: 700; }
.features { margin: 20px 0 0; padding: 0 0 0 23px; line-height: 25px; font-weight: 700; list-style: none; }
.features li { position: relative; margin-bottom: 4px; }
.features li::before {
  content: "";
  position: absolute;
  left: -22px;
  top: 11px;
  width: 5px;
  height: 5px;
  border-radius: 50%;
  background: #fafafa;
}
.features svg { display: inline-block; vertical-align: -2px; margin: 0 6px 0 3px; }

.main { flex: 1; min-width: 0; padding-right: 9px; }
.app-bar { display: flex; justify-content: flex-end; align-items: center; height: 58px; padding-right: 21px; }
.deploy { font-size: 12px; }
.kebab { margin-left: 24px; }
.content { padding: 53px 81px 0 80px; }
.content h1 { display: flex; align-items: center; gap: 5px; margin-left: -2px; font-size: 39px; line-height: 60px; white-space: nowrap; }
.content p { margin-top: 13px; line-height: 26px; }
.content h2 { display: flex; align-items: center; gap: 13px; padding-left: 7px; margin-top: 30px; font-size: 31px; line-height: 44px; }
.content .st-button { margin-top: 18px; background: #131720; }
.content hr { margin: 48px 0 29px; }
.content .caption { display: flex; align-items: center; gap: 5px; margin: 0; padding-left: 2px; font-size: 12px; line-height: 26px; color: #8d8f93; }

.scrollbar {
  position: absolute;
  right: 0;
  top: 2px;
  bottom: 0;
  width: 9px;
  display: flex;
  flex-direction: column;
  align-items: center;
  gap: 5px;
  padding: 1px 0 2px;
}
.thumb { flex: 1; width: 6px; margin-bottom: 8px; border-radius: 3px; background: #6b6c70; }
.arrow { border: 3px solid transparent; }
.up { border-top: 0; border-bottom: 5px solid #6b6c70; }
.down { border-bottom: 0; border-top: 5px solid #6b6c70; }

/* Taskbar */
.taskbar {
  flex: none;
  display: flex;
  align-items: center;
  height: 48px;
  padding: 0 19px 0 20px;
  background: #232516;
  box-shadow: inset 0 1px #44453b;
}
.search {
  display: flex;
  align-items: center;
  width: 220px;
  height: 32px;
  margin: 0 4px 0 13px;
  padding: 0 2px 0 10px;
  border: 1px solid #55584a;
  border-radius: 16px;
  background: #3d4035;
}
.search input { flex: 1; min-width: 0; margin-left: 10px; font-size: 13px; outline: none; }
.search input::placeholder { color: #d5d6d0; opacity: 1; }
.pinned { display: flex; gap: 4px; }
.pinned button { position: relative; width: 40px; height: 40px; border-radius: 4px; }
.pinned .current { background: #34362a; }
.running::after, .current::after {
  content: "";
  position: absolute;
  bottom: 1px;
  width: 6px;
  height: 3px;
  border-radius: 2px;
  background: #9c9d96;
}
.current::after { width: 16px; background: #d9a3e3; }
.badge {
  position: absolute;
  top: 3px;
  left: 19px;
  width: 21px;
  height: 16px;
  border-radius: 8px;
  background: #dfa0ea;
  color: #201524;
  font-size: 12px;
  line-height: 16px;
}
.profile-pip { position: absolute; top: 3px; right: 3px; }
.weather { gap: 5px; margin-left: auto; }
.weather-icon { position: relative; margin-top: -4px; }
.alert {
  position: absolute;
  top: -6px;
  right: -1px;
  width: 16px;
  height: 16px;
  border-radius: 50%;
  background: #ff99a4;
  color: #2a1518;
  font-size: 11px;
  line-height: 16px;
}
.two-line { display: flex; flex-direction: column; align-items: flex-start; font-size: 12px; line-height: 16px; white-space: nowrap; }
.weather .two-line { font-size: 12px; }
.dim { color: #b5b6ad; }
.tray { display: flex; align-items: center; margin-left: 42px; }
.tray button { margin-left: 18px; }
.tray .system { gap: 8px; margin-left: 16px; }
.tray .clock { align-items: flex-end; margin-left: 16px; }
```
